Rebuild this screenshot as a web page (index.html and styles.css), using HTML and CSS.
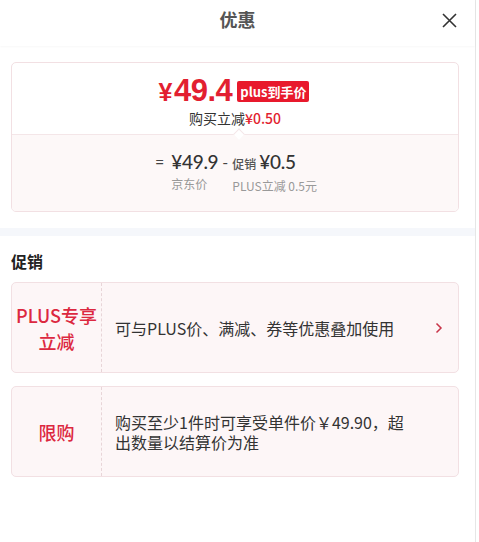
FILE: index.html
```html
<!DOCTYPE html>
<html lang="zh-CN">
<head>
<meta charset="utf-8">
<title>优惠</title>
<link rel="stylesheet" href="styles.css">
</head>
<body>
<div class="panel">
  <header class="header">
    <h1 class="title">优惠</h1>
    <span class="close" aria-label="关闭">
      <svg width="15" height="15" viewBox="0 0 15 15"><path d="M1 1 L14 14 M14 1 L1 14" stroke="#333" stroke-width="1.6" fill="none"/></svg>
    </span>
  </header>

  <section class="summary">
    <div class="summary-top">
      <div class="price-row">
        <span class="price"><span class="yen">¥</span>49.4</span>
        <span class="badge">plus到手价</span>
      </div>
      <div class="save">购买立减<span class="red">¥0.50</span></div>
    </div>
    <div class="summary-bottom">
      <div class="formula">
        <span class="op">=</span>
        <div class="term">
          <div class="term-val">¥49.9</div>
          <div class="term-label">京东价</div>
        </div>
        <span class="op minus">-</span>
        <div class="term">
          <div class="term-val"><span class="term-small">促销</span>¥0.5</div>
          <div class="term-label">PLUS立减 0.5元</div>
        </div>
      </div>
    </div>
  </section>

  <div class="band"></div>

  <h2 class="section-title">促销</h2>

  <div class="promo-list">
    <div class="promo">
      <div class="promo-tag">PLUS专享<br>立减</div>
      <div class="promo-body">
        <div class="promo-text">可与PLUS价、满减、券等优惠叠加使用</div>
        <svg class="arrow" width="8" height="12" viewBox="0 0 8 12"><path d="M1.5 1.5 L6 6 L1.5 10.5" stroke="#c83549" stroke-width="1.5" fill="none"/></svg>
      </div>
    </div>
    <div class="promo">
      <div class="promo-tag">限购</div>
      <div class="promo-body">
        <div class="promo-text narrow">购买至少1件时可享受单件价￥49.90，超出数量以结算价为准</div>
      </div>
    </div>
  </div>
</div>
</body>
</html>
```

FILE: styles.css
```css
* { box-sizing: border-box; }
html, body { margin: 0; padding: 0; background: #fff; }
body {
  font-family: "Noto Sans CJK SC", "Noto Sans", sans-serif;
  color: #333;
  width: 479px;
  height: 542px;
  overflow: hidden;
}
.panel {
  width: 476px;
  height: 542px;
  border-right: 1px solid #e6e6e6;
  background: #fff;
}
.header {
  position: relative;
  height: 46px;
  display: flex;
  align-items: center;
  justify-content: center;
  box-shadow: 0 1px 2px rgba(0,0,0,0.03);
}
.title {
  margin: 0;
  font-size: 18px;
  font-weight: 700;
  color: #555;
  line-height: 1;
  padding-bottom: 8px;
}
.close {
  position: absolute;
  right: 18px;
  top: 13px;
  display: flex;
}
.summary {
  margin: 16px 16px 0 11px;
  border: 1px solid #f2e0e3;
  border-radius: 5px;
  overflow: hidden;
}
.summary-top {
  height: 72px;
  display: flex;
  flex-direction: column;
  align-items: center;
  padding-top: 11px;
  position: relative;
  border-bottom: 1px solid #f4e6e8;
}
.summary-top::after {
  content: "";
  position: absolute;
  left: 223px;
  bottom: -4px;
  width: 7px;
  height: 7px;
  background: #fff;
  border-left: 1px solid #f4e6e8;
  border-top: 1px solid #f4e6e8;
  transform: rotate(45deg);
}
.price-row {
  display: flex;
  align-items: center;
  gap: 5px;
  padding-right: 2px;
  height: 32px;
}
.price {
  font-family: "Liberation Sans", Arial, sans-serif;
  font-weight: 700;
  font-size: 31px;
  color: #e21f31;
  letter-spacing: -0.5px;
  line-height: 1;
}
.yen { font-size: 25px; margin-right: 2px; }
.badge {
  background: #e8192c;
  color: #fff;
  font-weight: 700;
  font-size: 13px;
  line-height: 21px;
  height: 21px;
  padding: 0 3px;
  border-radius: 2px;
  margin-top: 2px;
}
.save {
  font-size: 14px;
  line-height: 18px;
  margin-top: 3px;
  color: #333;
}
.red { color: #e21f31; font-weight: 500; }
.summary-bottom {
  background: #fdf8f8;
  height: 76px;
  display: flex;
  justify-content: center;
  padding-top: 15px;
}
.formula {
  display: flex;
  align-items: flex-start;
  padding-left: 2px;
}
.op {
  font-family: "Lato", sans-serif;
  font-size: 16px;
  color: #444;
  line-height: 24px;
  margin: 0 7px 0 0;
}
.op.minus { margin: 0 4px 0 4px; }
.term-val {
  font-family: "Lato", "Noto Sans CJK SC", sans-serif;
  font-size: 19px;
  line-height: 24px;
  color: #333;
  font-weight: 500;
  letter-spacing: -0.3px;
}
.term-small {
  font-family: "Noto Sans CJK SC", sans-serif;
  font-size: 12px;
  color: #555;
  margin-right: 3px;
  letter-spacing: 0;
}
.term-label {
  font-size: 12px;
  color: #999;
  line-height: 16px;
  margin-top: 2px;
}
.band {
  height: 8px;
  background: #f5f7fb;
  margin-top: 16px;
}
.section-title {
  margin: 0;
  padding: 14px 11px 0;
  font-size: 16px;
  font-weight: 700;
  color: #222;
  line-height: 22px;
}
.promo-list {
  display: flex;
  flex-direction: column;
  gap: 13px;
  margin: 10px 16px 0 11px;
}
.promo {
  height: 91px;
  display: flex;
  background: #fdf6f7;
  border: 1px solid #f2e0e3;
  border-radius: 5px;
}
.promo-tag {
  width: 90px;
  flex: none;
  display: flex;
  align-items: center;
  justify-content: center;
  text-align: center;
  color: #dc2840;
  font-size: 18px;
  font-weight: 500;
  line-height: 26px;
  border-right: 1px dashed #e8d5d8;
}
.promo-body {
  flex: 1;
  display: flex;
  align-items: center;
  padding: 0 15px 0 13px;
}
.promo-text {
  flex: 1;
  font-size: 16px;
  line-height: 20px;
  color: #333;
}
.promo-text.narrow { max-width: 298px; flex: none; }
.arrow { flex: none; }
```
